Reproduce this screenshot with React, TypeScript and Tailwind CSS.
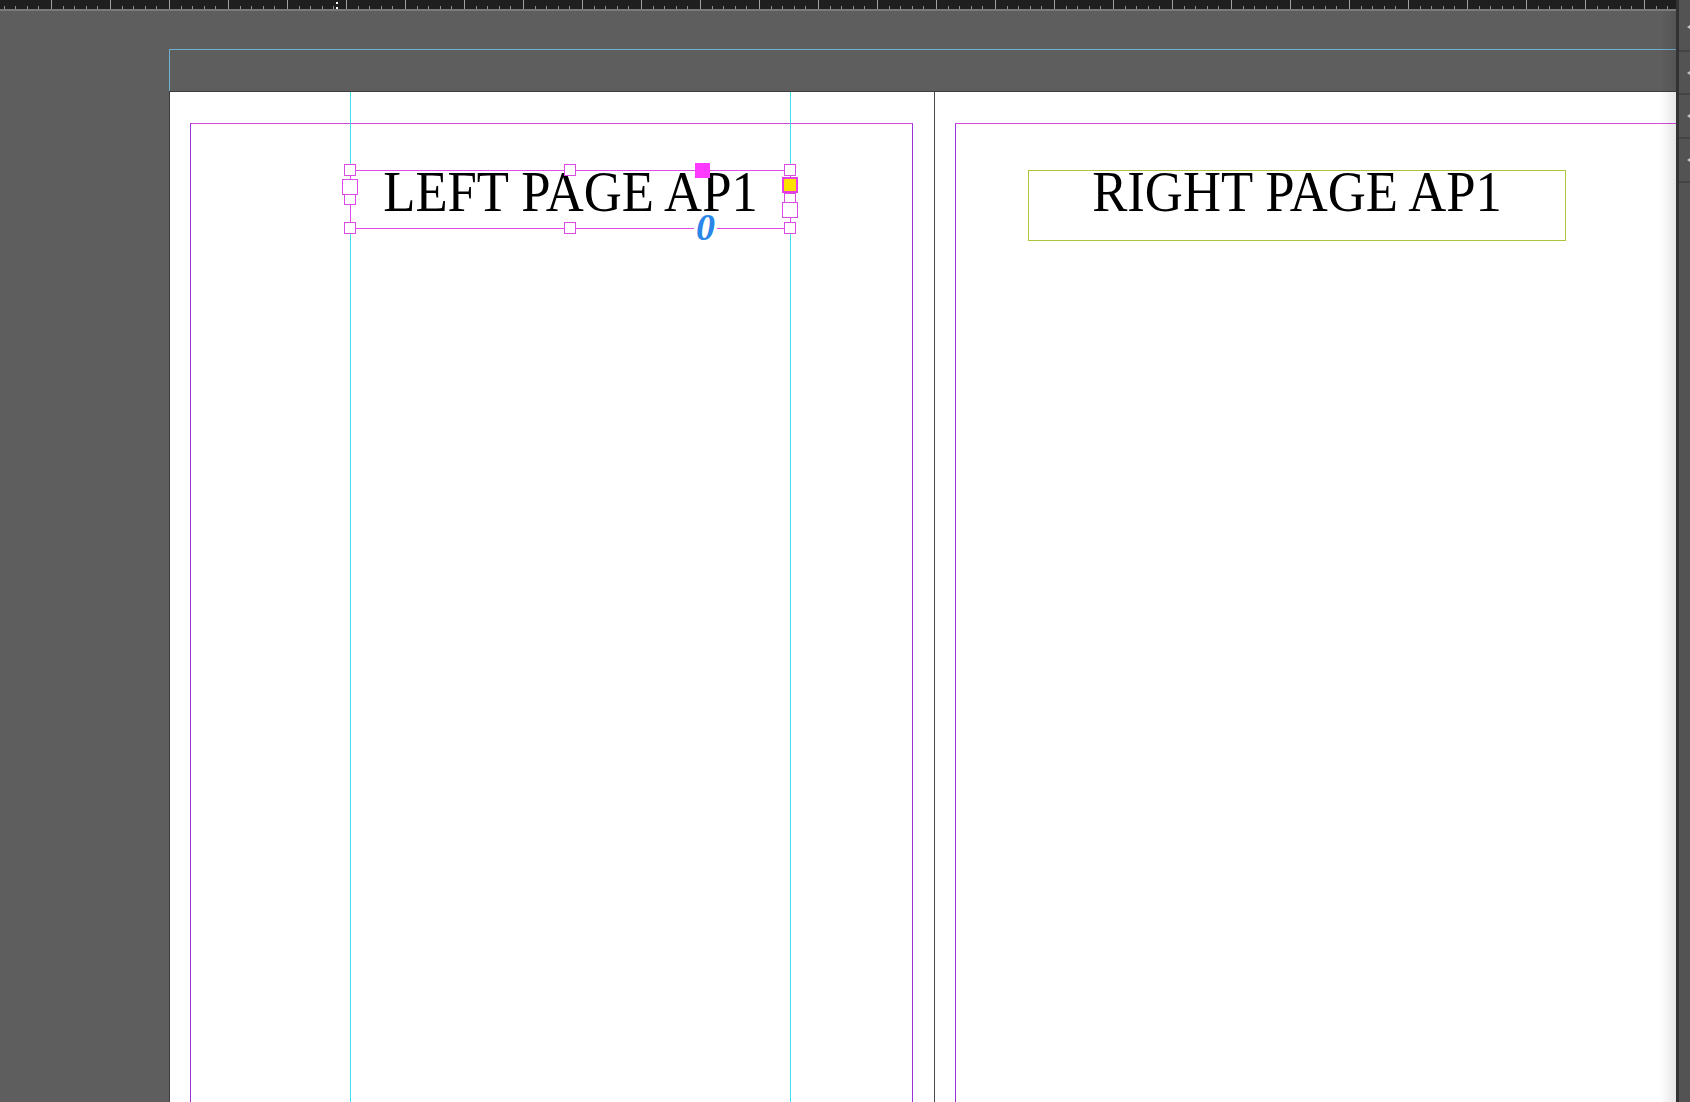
import React from "react";

const SEGMENTS = Array.from({ length: 30 }, (_, i) => i);
const MINOR = [0, 1, 2, 3, 4];

function Ruler() {
    return (
        <div className="relative h-[11px] shrink-0 overflow-hidden border-b-2 border-[#7a7a7a] bg-[#1f1f1f]">
            <div className="ml-[-8px] flex h-full">
                {SEGMENTS.map((i) => (
                    <div key={i} className="flex h-full w-[59px] shrink-0 border-l border-[#a0a0a0]">
                        <div className="grid h-[3px] flex-1 grid-cols-5 self-end">
                            {MINOR.map((j) => (
                                <div key={j} className={j < 4 ? "border-r border-[#8e8e8e]" : ""} />
                            ))}
                        </div>
                    </div>
                ))}
            </div>
            {/* cursor marker */}
            <div className="absolute left-[336px] top-[2px] h-[7px] border-l-2 border-dotted border-white" />
        </div>
    );
}

function Handle({ className }: { className: string }) {
    return <div className={`absolute h-3 w-3 border border-[#dc4ae6] bg-white ${className}`} />;
}

function Port({ className }: { className: string }) {
    return <div className={`absolute h-4 w-4 border border-[#dc4ae6] bg-white ${className}`} />;
}

function SelectedFrame() {
    return (
        <div className="relative h-[59px] w-[441px] border border-[#e04ce8]">
            <div className="scale-x-[0.94] text-center font-['Liberation_Serif',serif] text-[56px] leading-[42px] text-black">
                LEFT PAGE AP1
            </div>

            <Handle className="left-[213px] top-[-7px]" />
            <Handle className="left-[213px] top-[51px]" />
            <Handle className="left-[-7px] top-[22px]" />
            <Handle className="left-[433px] top-[22px]" />
            <Handle className="left-[-7px] top-[-7px]" />
            <Handle className="left-[433px] top-[-7px]" />
            <Handle className="left-[-7px] top-[51px]" />
            <Handle className="left-[433px] top-[51px]" />

            {/* in port, out port */}
            <Port className="left-[-9px] top-[8px]" />
            <div className="absolute left-[431px] top-[6px] h-4 w-4 border-2 border-[#e83ce8] bg-[#ffe100]" />
            <Port className="left-[431px] top-[31px]" />

            {/* live corner control */}
            <div className="absolute left-[344px] top-[-8px] h-[15px] w-[15px] bg-[#ff3aff]" />

            {/* text frame baseline indicator */}
            <span className="absolute left-[343px] top-[43px] h-[26px] bg-white px-[2px] font-['Liberation_Serif',serif] text-[38px] font-bold italic leading-[26px] text-[#2a86e8]">
                0
            </span>
        </div>
    );
}

function Spread() {
    return (
        <div className="relative flex h-[1100px] border-l border-t border-[#3d3d3d] bg-white">
            {/* column guides */}
            <div className="absolute bottom-0 left-[180px] top-0 w-px bg-[#3fdfeb]" />
            <div className="absolute bottom-0 left-[620px] top-0 w-px bg-[#3fdfeb]" />

            <div className="w-[764px] shrink-0 pl-[20px] pr-[21px] pt-[31px]">
                <div className="h-full border-x border-t border-x-[#9b34d6] border-t-[#d24ad9] pl-[159px] pt-[46px]">
                    <SelectedFrame />
                </div>
            </div>

            <div className="w-[765px] shrink-0 border-l border-[#4a4a4a] pl-[20px] pr-[21px] pt-[31px]">
                <div className="h-full border-x border-t border-x-[#9b34d6] border-t-[#d24ad9] pl-[72px] pt-[46px]">
                    <div className="h-[71px] w-[538px] border-[1.5px] border-[#a9c63c]">
                        <div className="scale-x-[0.94] text-center font-['Liberation_Serif',serif] text-[56px] leading-[42px] text-black">
                            RIGHT PAGE AP1
                        </div>
                    </div>
                </div>
            </div>
        </div>
    );
}

function PanelStrip() {
    return (
        <div className="flex w-[14px] shrink-0 flex-col overflow-hidden border-l-[3px] border-[#323232] bg-[#535353]">
            {[52, 43, 44, 44].map((h, i) => (
                <div
                    key={i}
                    className={`flex shrink-0 items-center justify-end border-b-2 border-[#444444] ${
                        h === 52 ? "h-[52px] pt-[4px]" : h === 43 ? "h-[43px]" : "h-[44px]"
                    }`}
                >
                    <svg width="6" height="8" viewBox="0 0 6 8" className="mr-[-3px]">
                        <path d="M0 4 L6 0 L6 8 Z" fill="#c4c4c4" />
                    </svg>
                </div>
            ))}
        </div>
    );
}

export default function App() {
    return (
        <div className="flex h-[1102px] w-[1690px] overflow-hidden bg-[#5e5e5e]">
            <div className="flex min-w-0 flex-1 flex-col overflow-hidden">
                <Ruler />
                <div className="relative flex-1 overflow-hidden bg-[#5e5e5e] pl-[169px] pt-[38px]">
                    <div className="h-[42px] border-l border-t border-[#6eb0cf]" />
                    <Spread />
                    <div className="absolute bottom-0 right-0 top-0 w-[16px] bg-linear-to-l from-black/10 to-transparent" />
                </div>
            </div>
            <PanelStrip />
        </div>
    );
}
